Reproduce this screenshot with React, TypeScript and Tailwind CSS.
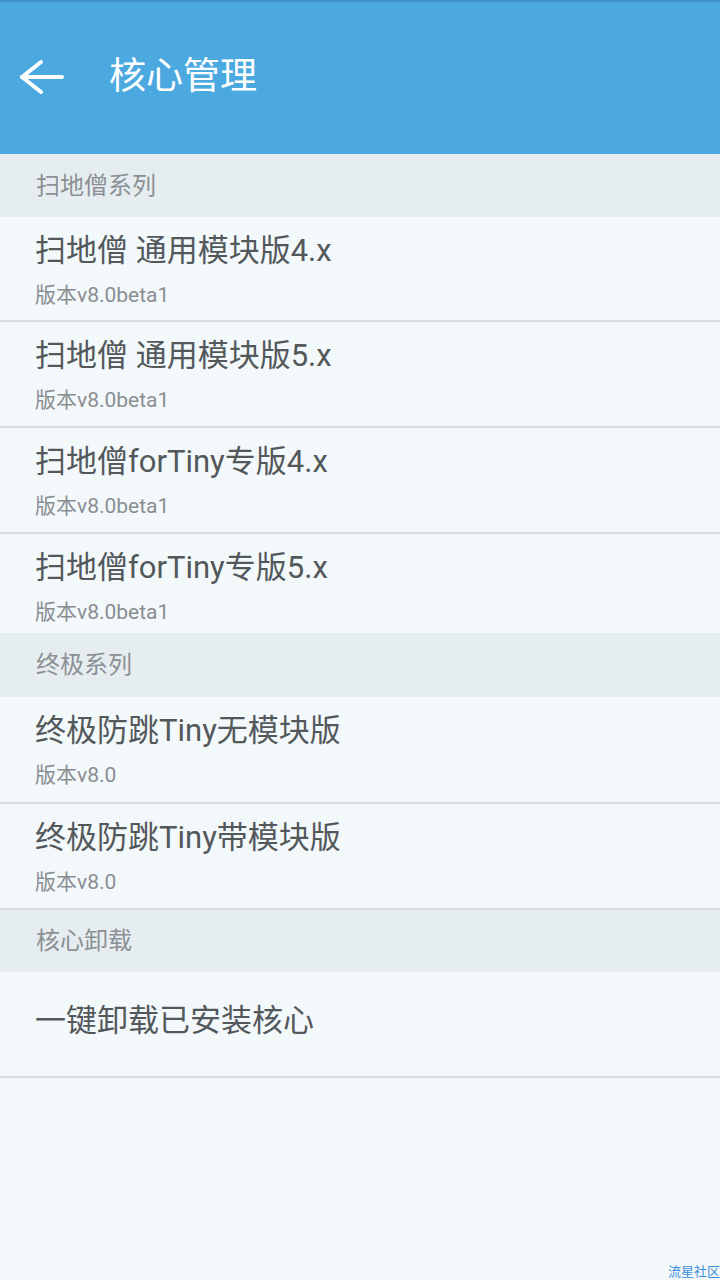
import React from 'react';

const font = { fontFamily: "Roboto, 'Noto Sans CJK SC', sans-serif" };

const Section: React.FC<{ title: string; className: string }> = ({ title, className }) => (
  <div className={`flex items-center bg-[#e6edf0] pl-[36px] text-[24px] text-[#8b9094] ${className}`}>
    {title}
  </div>
);

interface ItemProps {
  title: string;
  version: string;
  className: string;
}

const Item: React.FC<ItemProps> = ({ title, version, className }) => (
  <div className={`pl-[35px] pt-[14px] ${className}`}>
    <div className="text-[31px] leading-[40px] text-[#53585b]">{title}</div>
    <div className="mt-[10px] text-[21px] leading-[28px] text-[#8a8e92]">{version}</div>
  </div>
);

export default function App() {
  return (
    <div className="relative min-h-[1280px] bg-[#f3f8fb]" style={font}>
      {/* header */}
      <div className="flex h-[154px] items-center border-t-2 border-[#3f92c4] bg-[#4ba9df] pb-[2px]">
        <svg className="ml-[18px]" width="48" height="40" viewBox="0 0 48 40" fill="none" stroke="white" strokeWidth="4" strokeLinecap="round" strokeLinejoin="round">
          <path d="M44 20H4" />
          <path d="M23 5L4 20l19 15" />
        </svg>
        <span className="ml-[43px] text-[37px] text-white">核心管理</span>
      </div>

      <Section title="扫地僧系列" className="h-[63px]" />
      <Item title="扫地僧 通用模块版4.x" version="版本v8.0beta1" className="h-[105px] border-b-2 border-[#d9dee1]" />
      <Item title="扫地僧 通用模块版5.x" version="版本v8.0beta1" className="h-[106px] border-b-2 border-[#d9dee1]" />
      <Item title="扫地僧forTiny专版4.x" version="版本v8.0beta1" className="h-[106px] border-b-2 border-[#d9dee1]" />
      <Item title="扫地僧forTiny专版5.x" version="版本v8.0beta1" className="h-[99px]" />

      <Section title="终极系列" className="h-[64px]" />
      <Item title="终极防跳Tiny无模块版" version="版本v8.0" className="h-[107px] border-b-2 border-[#d9dee1]" />
      <Item title="终极防跳Tiny带模块版" version="版本v8.0" className="h-[106px] border-b-2 border-[#d9dee1]" />

      <Section title="核心卸载" className="h-[62px]" />
      <div className="flex h-[106px] items-center border-b-2 border-[#d9dee1] pb-[6px] pl-[35px] text-[31px] text-[#53585b]">
        一键卸载已安装核心
      </div>

      <div className="absolute bottom-[1px] right-0 text-[13px] leading-[14px] text-[#3d8fd9]">流星社区</div>
    </div>
  );
}
